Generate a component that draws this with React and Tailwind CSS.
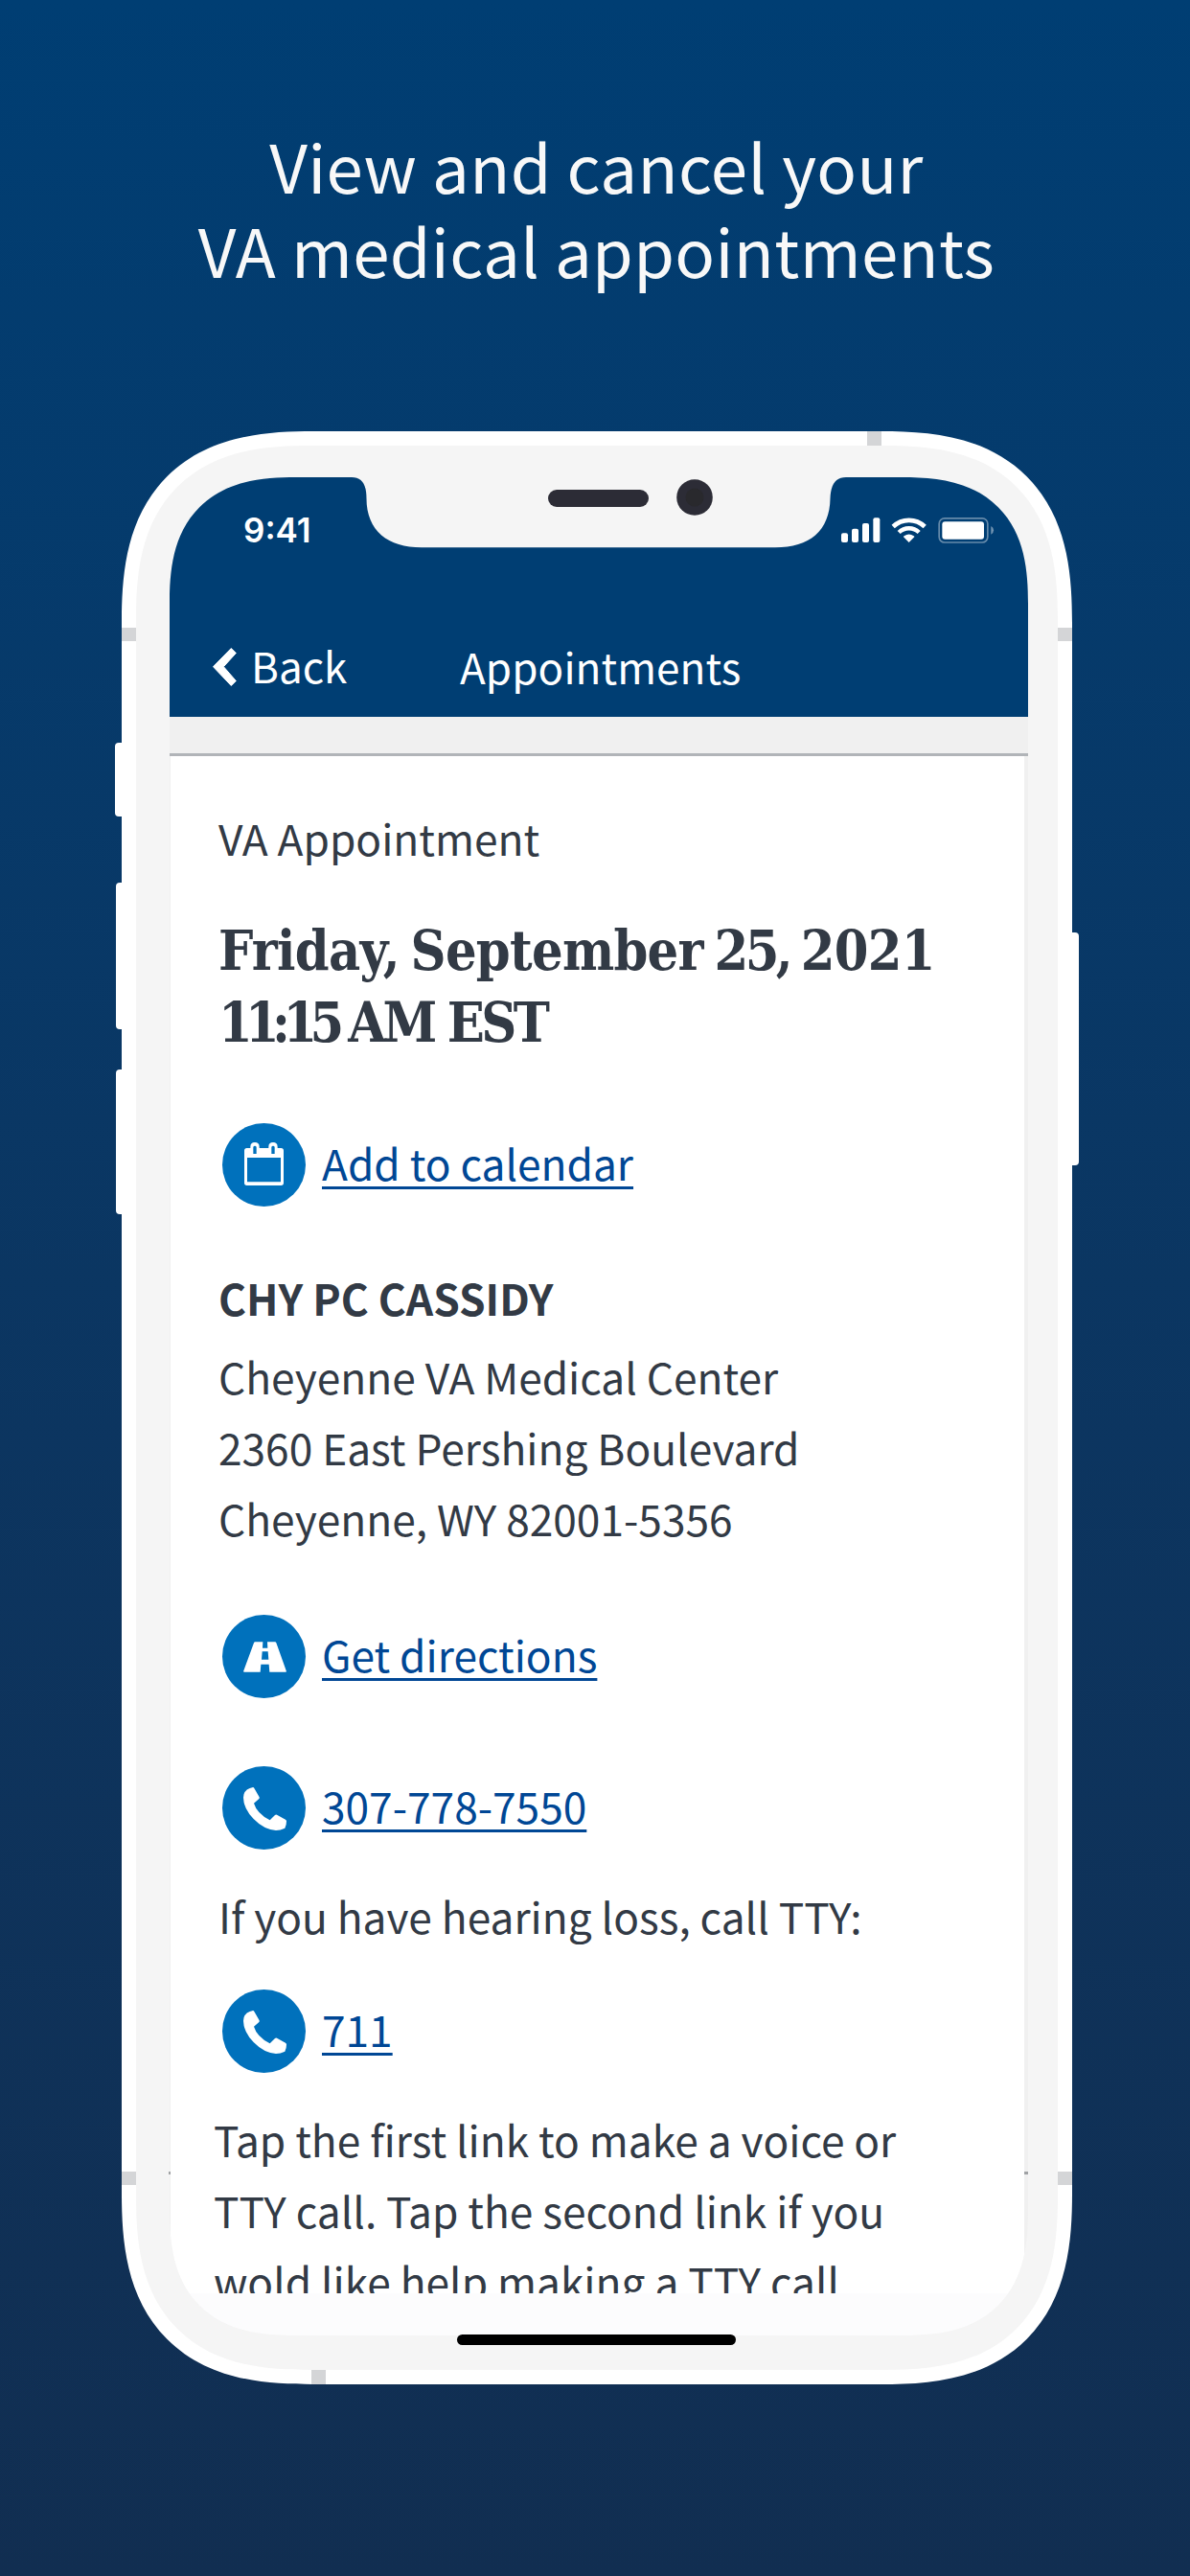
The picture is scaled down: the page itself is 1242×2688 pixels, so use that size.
const CalendarIcon = () => (
  <svg className="mb-[2px]" width="41" height="45" viewBox="0 0 123 135">
    <path fill="#fff" fillRule="evenodd" d="M8 18H19V14Q19 0 33 0T47 14V18H76V14Q76 0 90 0T104 14V18H115Q123 18 123 26V127Q123 135 115 135H8Q0 135 0 127V26Q0 18 8 18ZM9 48V124H114V48ZM28 15V36H38V15Q37 11 33 11T28 15ZM85 15V36H95V15Q94 11 90 11T85 15Z" />
  </svg>
);

const RoadIcon = () => (
  <svg className="mt-px ml-[2px]" width="45" height="32" viewBox="0 0 135 95">
    <path fill="#fff" fillRule="evenodd" d="M37 0H61L60 20H76L75 0H99Q102 0 103 3L134 90Q136 95 131 95H82L80 71H55L53 95H4Q-1 95 1 90L33 3Q34 0 37 0ZM59 30L57 56H79L77 30Z" />
  </svg>
);

const PhoneIcon = () => (
  <svg className="mt-[2px] ml-[2px]" width="45" height="45" viewBox="0 0 135 135">
    <path fill="#fff" d="M20 3L30 0Q33 0 34 3L50 31Q51 34 49 36L33 50Q42 81 83 103L99 87Q102 84 105 86L132 101Q135 103 135 106Q135 120 130 128Q116 135 102 135Q64 132 32 99Q1 67 0 32Q0 11 20 3Z" />
  </svg>
);

const StatusIcons = () => (
  <svg width="160" height="27" viewBox="54 57 480 81" fill="#fff">
    <rect x="54" y="106" width="21" height="29" rx="6" />
    <rect x="87" y="92" width="21" height="43" rx="6" />
    <rect x="120" y="75" width="21" height="60" rx="6" />
    <rect x="154" y="58" width="21" height="77" rx="6" />
    <g fill="none" stroke="#fff">
      <path strokeWidth="14" d="M216.500 85.500A71 71 0 0 1 315.500 85.500" />
      <path strokeWidth="13" d="M234.500 103.500A45 45 0 0 1 297.500 103.500" />
      <rect x="360.500" y="59.500" width="152" height="75.500" rx="17" strokeWidth="5" opacity=".4" />
    </g>
    <path d="M266 135L249 118Q248 116 251 115A25 25 0 0 1 281 115Q284 116 283 118Z" />
    <rect x="370" y="70" width="131" height="55" rx="9" />
    <path opacity=".45" d="M523 84Q531 88 531 97T523 110Z" />
  </svg>
);

function LinkRow({ icon, children }) {
  return (
    <div className="ml-[4px] flex h-[87px] items-center gap-[17px]">
      <span className="flex size-[87px] shrink-0 items-center justify-center rounded-full bg-[#0071bc]">{icon}</span>
      <a className="mb-[6px] whitespace-nowrap text-[#004795] underline decoration-[3px] underline-offset-[6px]">{children}</a>
    </div>
  );
}

/* Pair of antenna bands on one side rail of the phone */
function SideRail() {
  return (
    <div className="flex w-[15px] shrink-0 flex-col justify-between pt-[205px] pb-[208px]">
      <i className="h-[14px] bg-[#d4d5d7]" />
      <i className="h-[14px] bg-[#d4d5d7]" />
    </div>
  );
}

export default function App() {
  return (
    <div className="flex h-[2688px] w-[1242px] flex-col overflow-hidden bg-linear-to-b from-[#003e73] to-[#112e51] font-['Noto_Sans_CJK_JP',sans-serif]">
      <h1 className="h-[450px] shrink-0 pt-[128px] pl-[3px] text-center text-[69px] leading-[88px] tracking-[0.35px] text-[#f8f8f8]">
        View and cancel your
        <br />
        VA medical appointments
      </h1>

      <div className="flex h-[2038px] shrink-0 pl-[120px]">
        {/* Mute switch and volume keys */}
        <div className="flex w-[7px] shrink-0 flex-col items-end pt-[325px]">
          <i className="h-[77px] w-[7px] rounded-l-[4px] bg-white" />
          <i className="mt-[69px] h-[153px] w-[6px] rounded-l-[4px] bg-white" />
          <i className="mt-[42px] h-[151px] w-[6px] rounded-l-[4px] bg-white" />
        </div>

        {/* Phone body */}
        <div className="relative flex w-[992px] shrink-0 overflow-hidden rounded-[160px] bg-white [corner-shape:superellipse(1.36)] supports-[corner-shape:squircle]:rounded-[200px]">
          <SideRail />
          <div className="flex grow flex-col">
            <div className="flex h-[15px] shrink-0 justify-end pr-[184px]">
              <i className="w-[15px] bg-[#d4d5d7]" />
            </div>
            <div className="grow rounded-[145px] bg-[#f5f5f5] pt-[33px] pr-[31px] pl-[35px] [corner-shape:superellipse(1.36)] supports-[corner-shape:squircle]:rounded-[182px]">
              <div className="relative flex h-[1939px] flex-col overflow-hidden rounded-[105px] bg-[#f0f0f0] [corner-shape:superellipse(1.36)] supports-[corner-shape:squircle]:rounded-[132px]">
                <header className="h-[250px] shrink-0 bg-[#003e73] text-white">
                  <div className="flex h-[110px] items-center justify-between pr-[35px] pl-[77px]">
                    <span className="font-[Inter,sans-serif] text-[35px] leading-none font-semibold">9:41</span>
                    <StatusIcons />
                  </div>
                  <nav className="flex gap-[15px] pt-[56px] pl-[45px] text-[44px] leading-[60px]">
                    <svg className="mt-[12px]" width="25" height="40" viewBox="0 0 25 40" fill="#fff" stroke="#fff" strokeLinejoin="round">
                      <path d="M.5 19.700L19.300 .5L24.300 5.500L11.400 19.700L24.300 34.500L19.300 39.500Z" />
                    </svg>
                    <span className="w-[203px]">Back</span>
                    <span className="mt-px tracking-[0.1px]">Appointments</span>
                  </nav>
                </header>
                <div className="h-[41px] shrink-0 border-b-[3px] border-[#b1b4b8]" />

                <main className="mr-[4px] ml-px flex h-[1604px] shrink-0 flex-col overflow-hidden bg-white pt-[48px] pl-[50px] text-[44.25px] leading-[74px] text-[#323a45]">
                  <p>VA Appointment</p>
                  <h2 className="mt-[43px] mb-px origin-left scale-x-[0.9] font-['DejaVu_Serif',serif] text-[57px] leading-[75px] font-bold tracking-[-0.8px] whitespace-nowrap [word-spacing:-6px]">
                    Friday, September <span className="tracking-[-4px]">25,</span> 2021
                    <br />
                    <span className="tracking-[-8.5px]">11:15</span> <span className="tracking-[-4px] [word-spacing:0px]">AM EST</span>
                  </h2>
                  <div className="mt-[67px]">
                    <LinkRow icon={<CalendarIcon />}>Add to calendar</LinkRow>
                  </div>
                  <p className="mt-[58px] font-bold">CHY PC CASSIDY</p>
                  <address className="mt-[8px] not-italic">
                    Cheyenne VA Medical Center
                    <br />
                    2360 East Pershing Boulevard
                    <br />
                    Cheyenne, WY 82001-5356
                  </address>
                  <div className="mt-[64px] flex flex-col gap-[71px]">
                    <LinkRow icon={<RoadIcon />}>Get directions</LinkRow>
                    <LinkRow icon={<PhoneIcon />}>307-778-7550</LinkRow>
                  </div>
                  <p className="mt-[32px]">If you have hearing loss, call TTY:</p>
                  <div className="mt-[40px]">
                    <LinkRow icon={<PhoneIcon />}>711</LinkRow>
                  </div>
                  <p className="mt-[32px] -ml-[5px] whitespace-nowrap">
                    Tap the first link to make a voice or
                    <br />
                    TTY call. Tap the second link if you
                    <br />
                    wold like help making a TTY call
                  </p>
                </main>
                <div className="grow bg-[#fcfcfd]" />

                {/* Sensor housing */}
                <svg className="absolute top-0 left-[190px]" width="518" height="74" viewBox="0 0 518 74" fill="#f5f5f5">
                  <path d="M0 0C11 0 15.500 8 15.500 22C15.500 56 38 73.300 73 73.300H442C478 73.300 499 56 499.500 22C500 8 505 0 516 0Z" />
                  <rect x="205" y="13" width="105" height="18" rx="9" fill="#2c2c36" />
                  <circle cx="358" cy="21" r="18.800" fill="#2c2c36" />
                  <circle cx="358" cy="21" r="9.500" fill="#29292d" />
                </svg>
              </div>
              {/* Home indicator */}
              <div className="relative -mt-px ml-[300px] h-[11px] w-[291px] rounded-full bg-black" />
            </div>
            <div className="flex h-[15px] shrink-0 pl-[183px]">
              <i className="w-[15px] bg-[#d4d5d7]" />
            </div>
          </div>
          <SideRail />
          <i className="absolute top-[1816px] left-[49px] h-[3px] w-[2px] bg-[#a0a2a5]" />
          <i className="absolute top-[1816px] right-[46px] h-[3px] w-[4px] bg-[#a0a2a5]" />
        </div>

        {/* Power key */}
        <div className="pt-[523px]">
          <i className="block h-[243px] w-[7px] rounded-r-[4px] bg-white" />
        </div>
      </div>
    </div>
  );
}
